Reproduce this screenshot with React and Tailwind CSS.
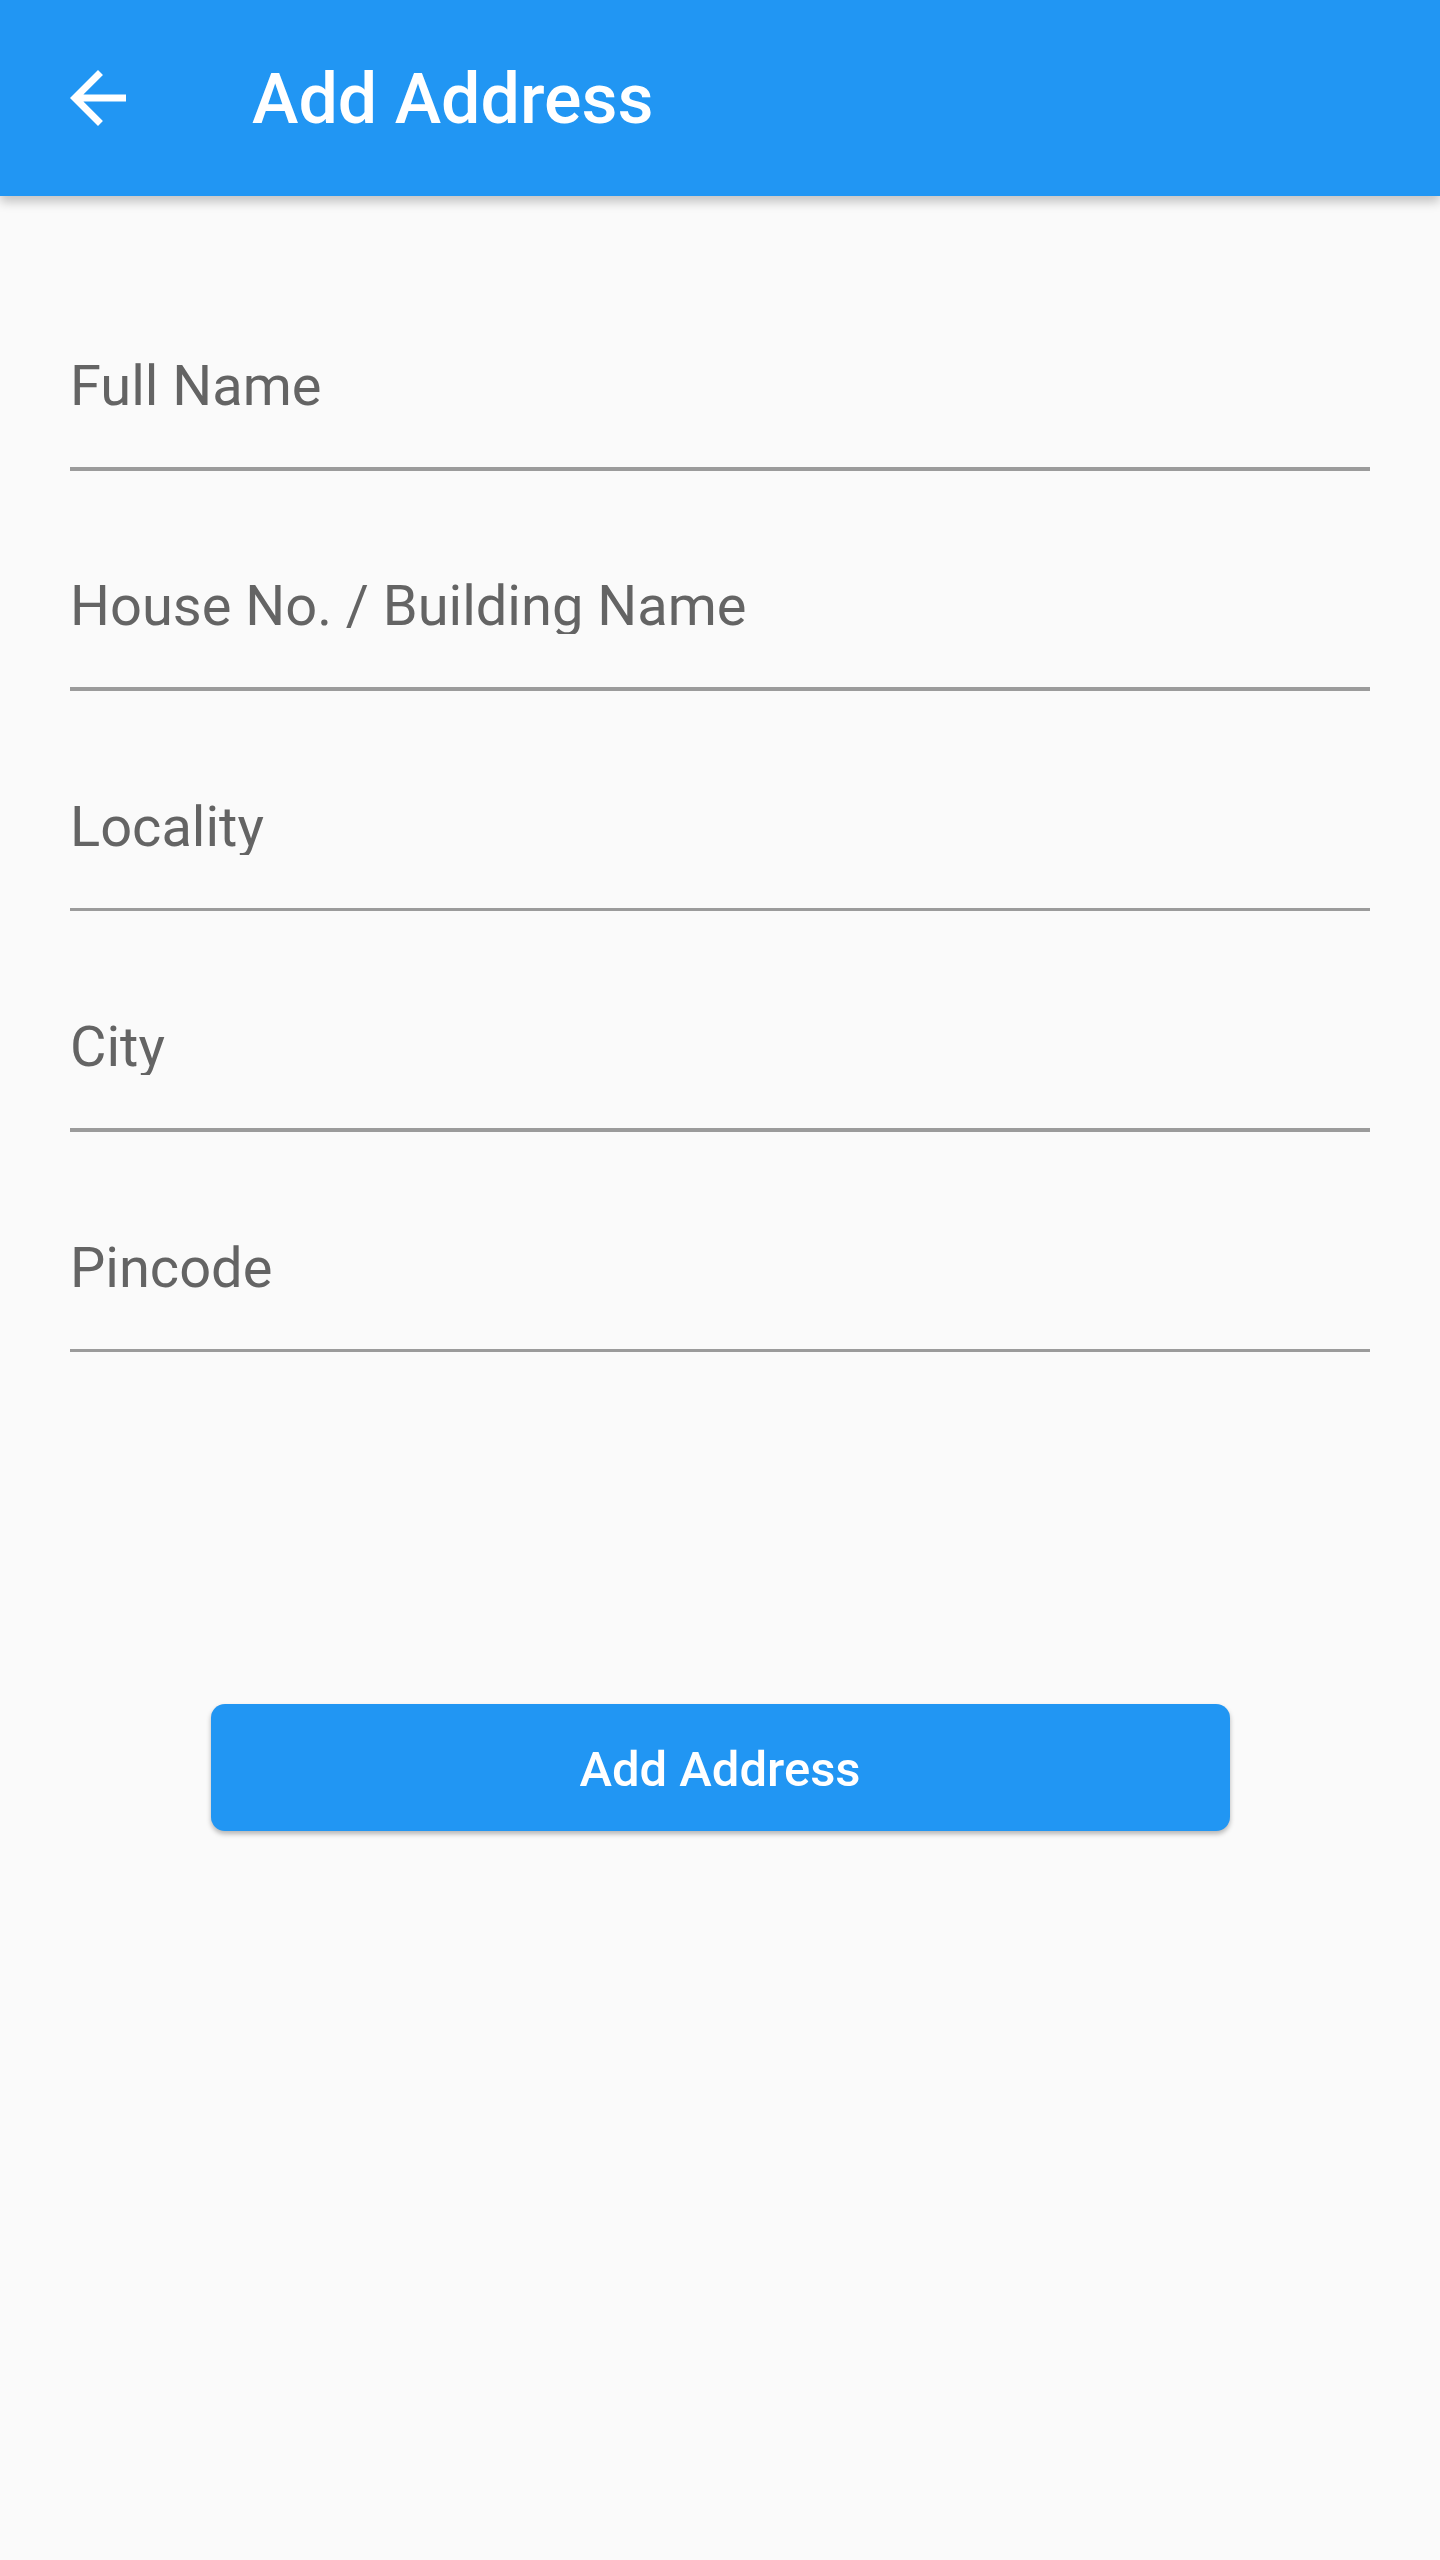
import React, { useState } from 'react'

// Add Address screen: app bar + underlined text fields + submit button
const fields = ['Full Name', 'House No. / Building Name', 'Locality', 'City', 'Pincode']

const Field = ({ label, value, onChange }) => (
  <div className="flex flex-col pt-[2px]">
    <input
      type="text"
      value={value}
      onChange={(e) => onChange(e.target.value)}
      placeholder={label}
      className="h-[56px] bg-transparent text-[56px] leading-none text-[#222] placeholder:text-[#646464] outline-none"
    />
    <div className="mt-[53px] h-[3.5px] bg-[#9b9b9b]" />
  </div>
)

const App = () => {
  const [values, setValues] = useState({})

  return (
    <div className="min-h-screen bg-[#fafafa] font-['Roboto',sans-serif]">
      <header className="relative z-10 flex h-[196px] items-center bg-[#2196F3] shadow-[0_6px_10px_rgba(0,0,0,0.22)]">
        <button className="ml-[56px] flex h-[84px] w-[84px] items-center justify-center text-white">
          <svg viewBox="0 0 24 24" className="h-[84px] w-[84px]" fill="currentColor">
            <path d="M20 11H7.83l5.59-5.59L12 4l-8 8 8 8 1.41-1.41L7.83 13H20v-2z" />
          </svg>
        </button>
        <h1 className="ml-[112px] mt-[2px] text-[70px] font-medium leading-none text-white">
          Add Address
        </h1>
      </header>

      <main className="px-[70px] pt-[160px]">
        <div className="flex flex-col gap-[105.9px]">
          {fields.map((f) => (
            <Field
              key={f}
              label={f}
              value={values[f] || ''}
              onChange={(v) => setValues({ ...values, [f]: v })}
            />
          ))}
        </div>

        <button className="mx-auto mt-[352px] flex h-[127px] w-[1019px] items-center justify-center rounded-[14px] bg-[#2196F3] pt-[3px] text-[49px] font-medium leading-none text-white shadow-[0_3px_5px_rgba(0,0,0,0.28)]">
          Add Address
        </button>
      </main>
    </div>
  )
}

export default App
